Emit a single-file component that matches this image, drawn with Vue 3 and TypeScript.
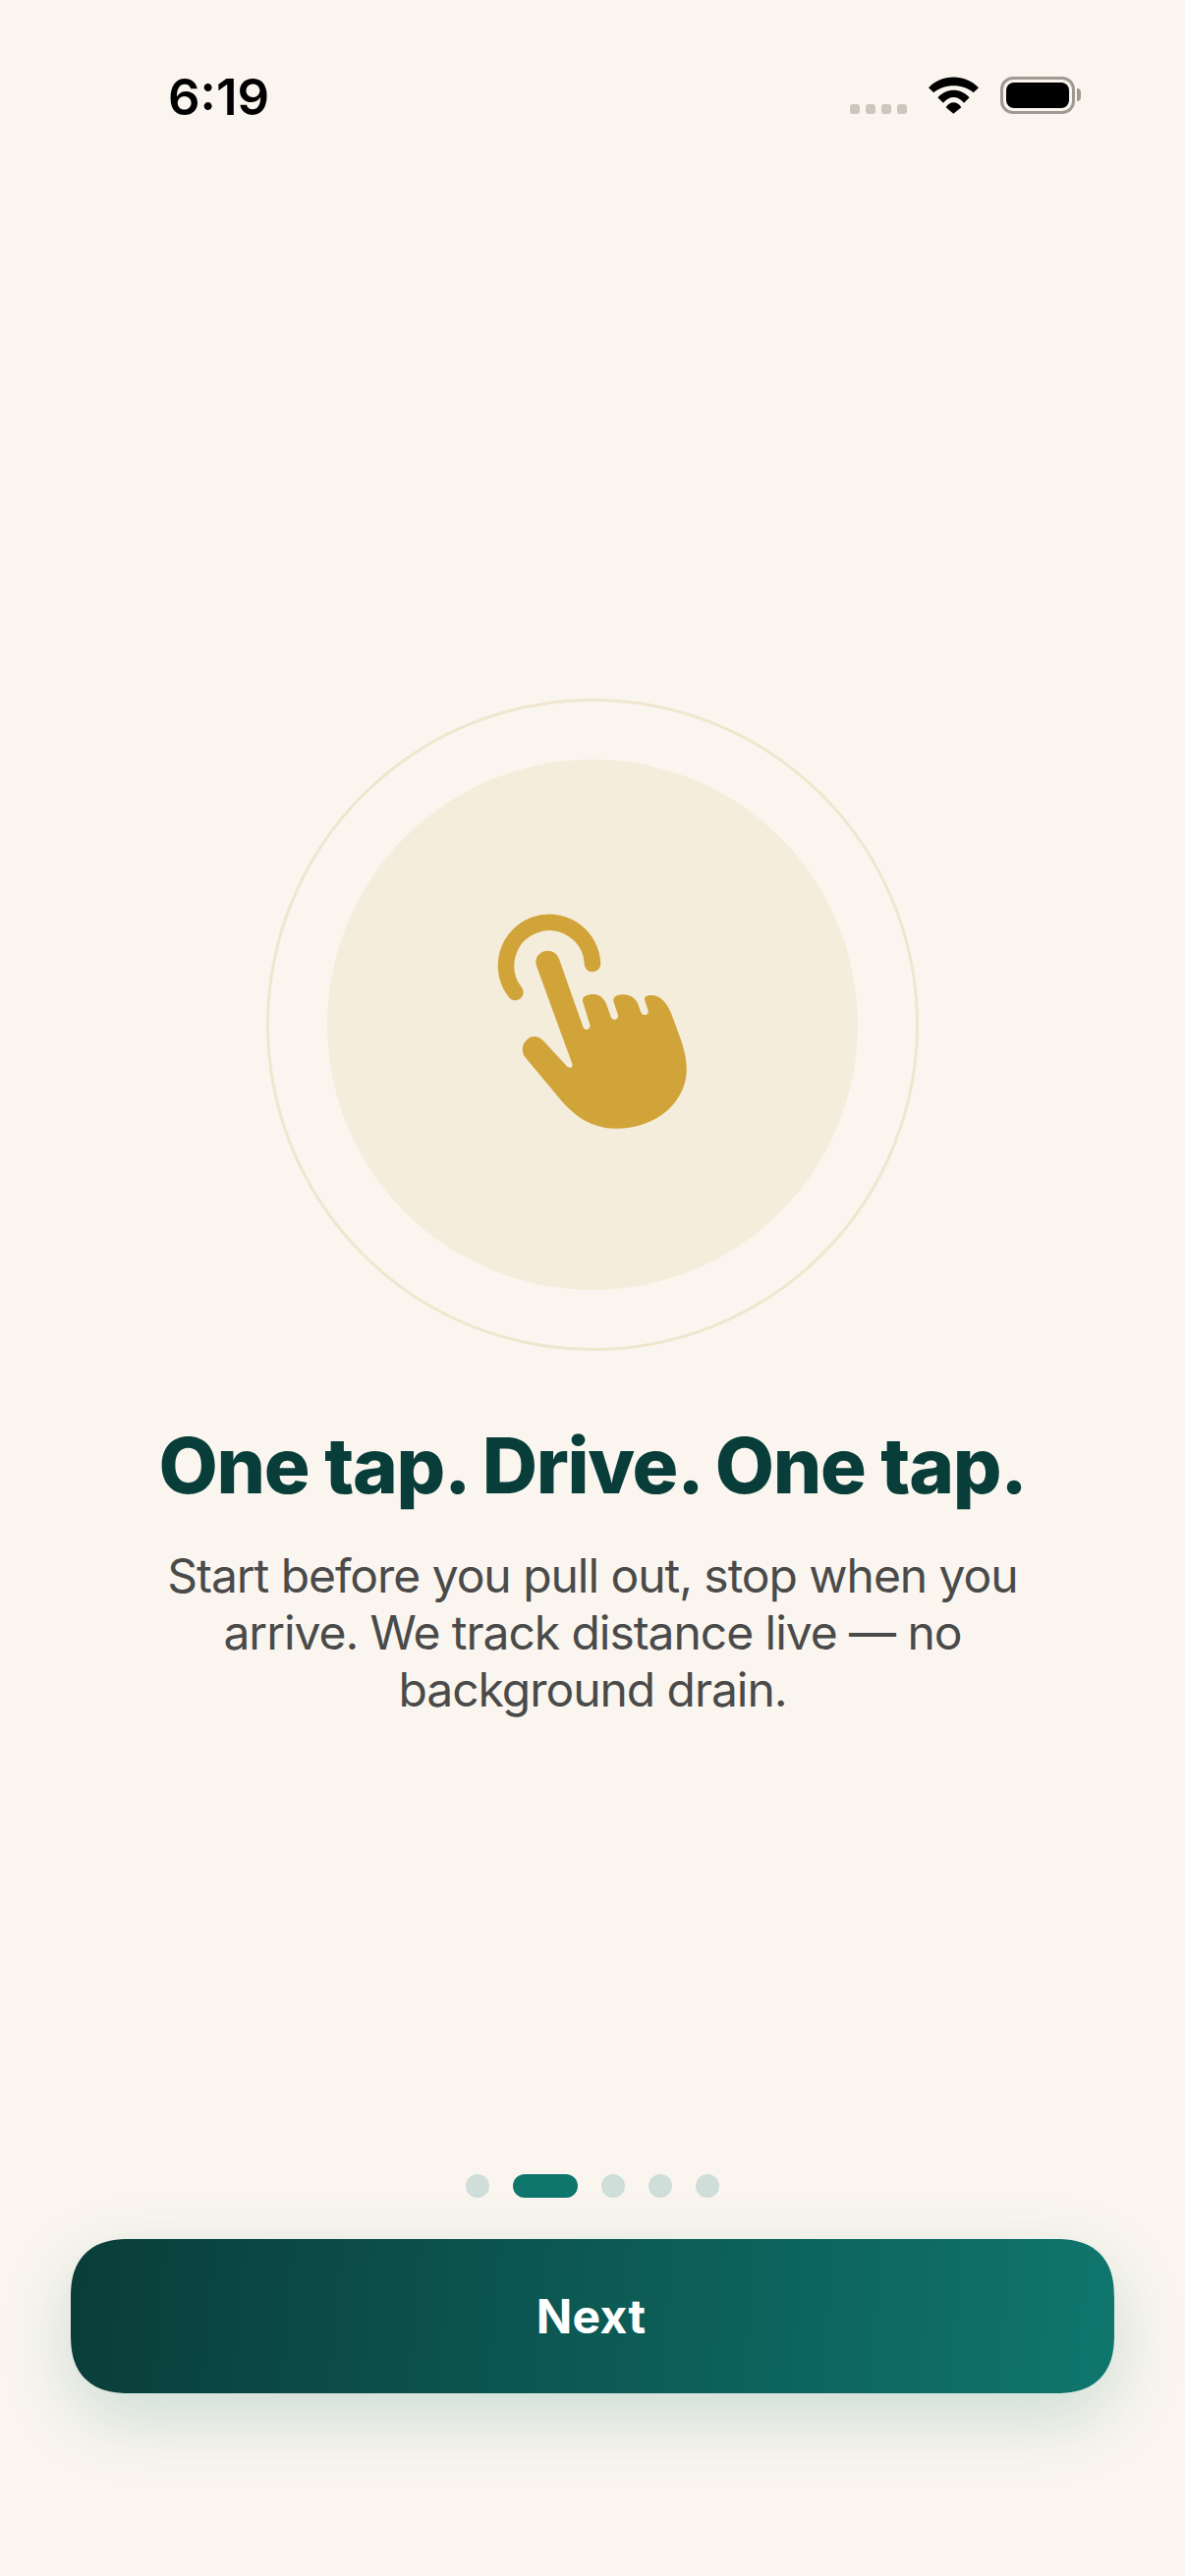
<script setup lang="ts">
const dots: boolean[] = [false, true, false, false, false]
</script>

<template>
  <div class="page">
    <header class="status">
      <span class="time">6:19</span>
      <div class="indicators">
        <div class="signal"><i v-for="n in 4" :key="n"></i></div>
        <svg class="wifi" width="51" height="38" viewBox="0 0 153 113">
          <path d="M0 33C40 -10 112 -10 153 33L137 48C105 20 48 20 16 48Z" />
          <path d="M28 63C55 33 98 33 125 63L108 80C90 57 63 57 45 80Z" />
          <path d="M53 93C65 73 88 73 100 93L76 113Z" />
        </svg>
        <div class="battery"><div class="level"></div></div>
        <div class="nub"></div>
      </div>
    </header>

    <main class="hero">
      <div class="ring">
        <div class="disc">
          <svg width="246" height="286" viewBox="0 0 738 858">
            <path d="M133 330A132 132 0 1 1 369 243" fill="none" stroke="#d1a43a" stroke-width="50" stroke-linecap="round" />
            <path fill="#d1a43a" d="M198 250C190 222 210 203 233 203C250 203 262 214 267 228L340 435C344 447 360 447 362 432L339 358C336 344 350 336 372 336C392 336 405 350 411 365L425 405C430 418 449 416 447 400L433 358C430 344 445 336 465 337C488 338 502 350 509 368L516 390C522 404 541 402 539 386L528 353C527 342 538 338 552 339C578 342 596 362 610 396L640 478C652 515 658 545 656 575C652 660 570 746 440 746C365 746 310 705 265 650L165 530C148 510 155 485 172 472C186 461 205 464 218 477L290 555C298 564 311 561 307 548Z" />
          </svg>
        </div>
      </div>
      <h1 class="title">One tap. Drive. One tap.</h1>
      <p class="body">Start before you pull out, stop when you arrive. We track distance live — no background drain.</p>
    </main>

    <footer class="footer">
      <div class="dots">
        <span v-for="(active, i) in dots" :key="i" class="dot" :class="{ active }"></span>
      </div>
      <button class="next">Next</button>
    </footer>
  </div>
</template>

<style>
html, body { margin: 0; background: #faf6ef; }
</style>

<style scoped>
.page {
  width: 1206px;
  height: 2622px;
  display: flex;
  flex-direction: column;
  background: #faf6ef;
  font-family: Inter, "Liberation Sans", sans-serif;
  overflow: hidden;
}
.status {
  height: 174px;
  box-sizing: border-box;
  padding: 62px 106px 0 171px;
  display: flex;
  justify-content: space-between;
  align-items: flex-start;
}
.time {
  font-size: 51px;
  font-weight: 600;
  line-height: 74px;
  color: #000;
}
.indicators {
  display: flex;
  align-items: flex-start;
  margin-top: -2px;
}
.signal {
  display: flex;
  gap: 6px;
  margin-top: 46px;
  margin-right: 22px;
}
.signal i {
  width: 10px;
  height: 10px;
  border-radius: 3px;
  background: #cbc7be;
}
.wifi {
  margin-top: 18px;
  margin-right: 22px;
  fill: #000;
}
.battery {
  width: 76px;
  height: 38px;
  margin-top: 18px;
  box-sizing: border-box;
  border: 3px solid #9e9a92;
  border-radius: 13px;
  padding: 3px;
}
.level {
  height: 100%;
  background: #000;
  border-radius: 8px;
}
.nub {
  width: 4px;
  height: 13px;
  margin-top: 30px;
  margin-left: 2px;
  background: #9e9a92;
  border-radius: 0 4px 4px 0;
}
.hero {
  display: flex;
  flex-direction: column;
  align-items: center;
  padding-top: 537px;
}
.ring {
  width: 664px;
  height: 664px;
  box-sizing: border-box;
  border: 3px solid #efe6cf;
  border-radius: 50%;
  display: flex;
  align-items: center;
  justify-content: center;
}
.disc {
  width: 540px;
  height: 540px;
  border-radius: 50%;
  background: #f5eddc;
  display: flex;
  align-items: center;
  justify-content: center;
}
.title {
  margin: 71px 0 0;
  font-size: 78px;
  font-weight: 850;
  line-height: 92px;
  letter-spacing: -1.3px;
  color: #083d3a;
  text-align: center;
}
.body {
  margin: 37px 0 0;
  width: 960px;
  font-size: 48px;
  line-height: 58px;
  letter-spacing: -1.05px;
  color: #4a4a4a;
  text-align: center;
}
.footer {
  margin-top: auto;
  padding: 0 72px 186px;
  display: flex;
  flex-direction: column;
  align-items: center;
}
.dots {
  display: flex;
  gap: 24px;
  margin-bottom: 42px;
}
.dot {
  width: 24px;
  height: 24px;
  border-radius: 12px;
  background: #cfded8;
}
.dot.active {
  width: 66px;
  background: #0f766e;
}
.next {
  width: 1062px;
  height: 157px;
  border: 0;
  padding: 0 3px 0 0;
  border-radius: 60px;
  corner-shape: superellipse(1.3);
  background: linear-gradient(95deg, #0a3d3a 0%, #0f766e 100%);
  box-shadow: 0 24px 72px rgba(15, 118, 110, 0.2);
  color: #fff;
  font-family: inherit;
  font-size: 48px;
  font-weight: 700;
  letter-spacing: 0.3px;
}
</style>
